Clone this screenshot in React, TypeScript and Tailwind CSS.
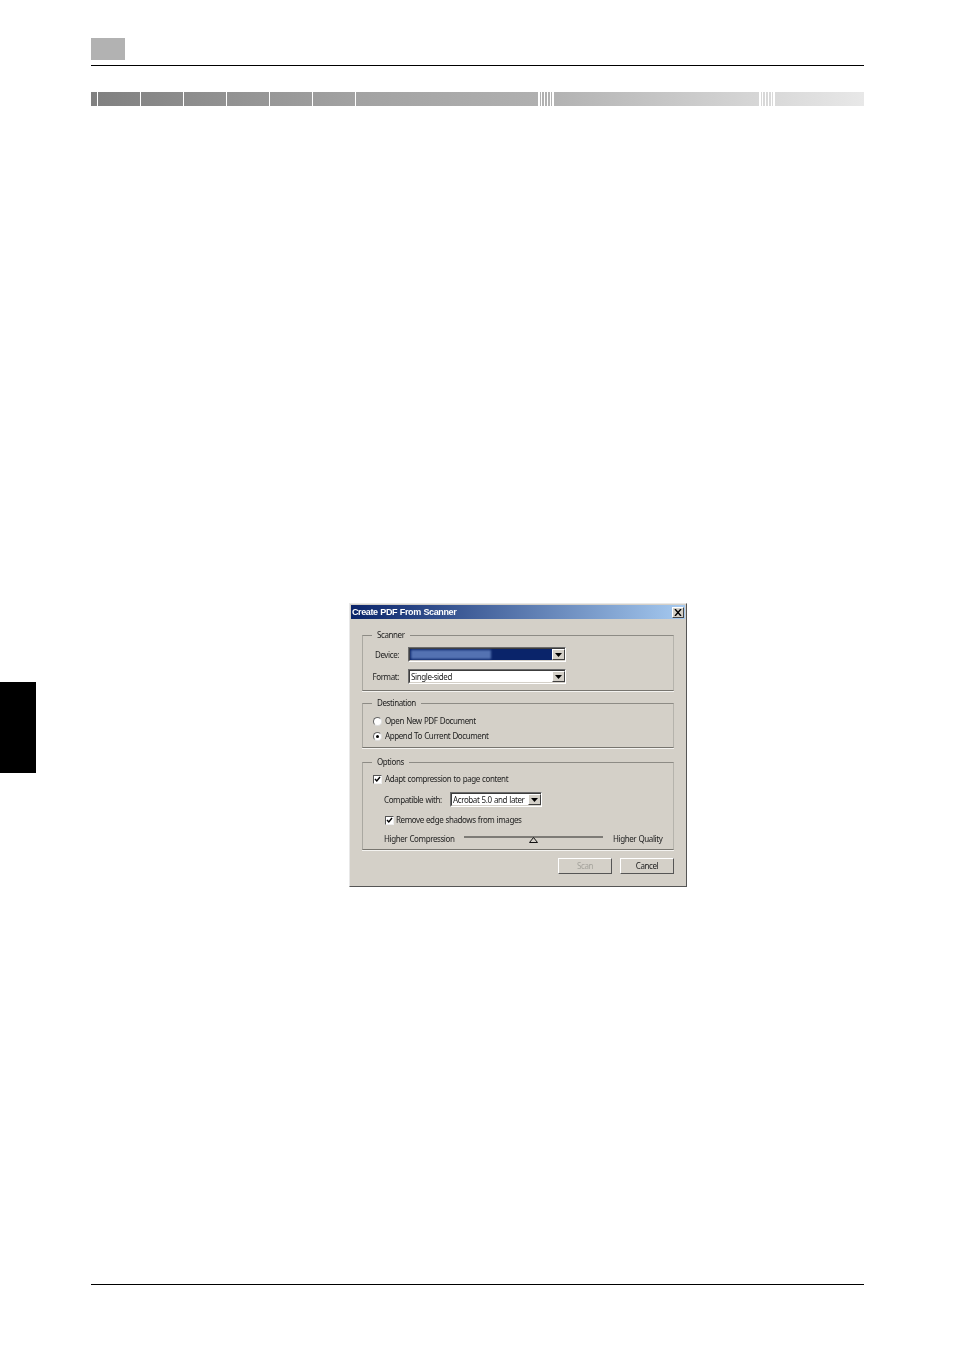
import React from 'react';

const sunken = 'border border-t-[#6b6b6b] border-l-[#6b6b6b] border-r-white border-b-white';
const sunkenInner = 'border border-t-[#3c3c3c] border-l-[#3c3c3c] border-r-[#d4d0c8] border-b-[#d4d0c8]';
const GRADIENT = 'bg-[linear-gradient(90deg,#808080_0%,#a2a2a2_34%,#b0b0b0_58%,#d6d6d6_86%,#e8e8e8_100%)]';

function Stripes() {
  return (
    <div className="flex h-full w-[16px] shrink-0 justify-between">
      {[0, 1, 2, 3, 4, 5].map((i) => (
        <div key={i} className="h-full w-[1.5px] bg-white" />
      ))}
    </div>
  );
}

function HeaderBar() {
  return (
    <div className={`ml-[91px] mt-[26px] flex h-[14px] w-[773px] ${GRADIENT}`}>
      <div className="w-[6px] shrink-0 border-r border-white box-content" />
      {[0, 1, 2, 3, 4, 5].map((i) => (
        <div key={i} className="w-[43px] shrink-0 border-r border-white" />
      ))}
      <div className="w-[182px] shrink-0" />
      <Stripes />
      <div className="w-[205px] shrink-0" />
      <Stripes />
    </div>
  );
}

function ArrowButton() {
  return (
    <div className="flex h-full w-[13px] shrink-0 items-center justify-center border border-t-white border-l-white border-r-[#404040] border-b-[#404040] bg-[#d4d0c8]">
      <svg width="7" height="4" viewBox="0 0 7 4">
        <path d="M0 0h7L3.5 4z" fill="#000" />
      </svg>
    </div>
  );
}

function Combo({ className, children }: { className: string; children: React.ReactNode }) {
  return (
    <div className={`${sunken} h-[15px] ${className}`}>
      <div className={`${sunkenInner} flex h-full w-full border-r-0 bg-white`}>
        {children}
        <ArrowButton />
      </div>
    </div>
  );
}

function Group({ title, className, children }: { title: string; className: string; children: React.ReactNode }) {
  return (
    <fieldset className={`ml-[11px] w-[312px] border border-t-[#8d8b85] border-b-[#77756f] border-l-[#aaa8a1] border-r-[#b5b3ac] shadow-[0_1px_0_#f4f3f0] ${className}`}>
      <legend className="ml-[9px] px-[5px] leading-[12px]">{title}</legend>
      {children}
    </fieldset>
  );
}

function Check({ className }: { className?: string }) {
  return (
    <div className={`flex h-[9px] w-[9px] shrink-0 items-center justify-center border border-t-[#555] border-l-[#555] border-r-[#eee] border-b-[#eee] bg-white ${className ?? ''}`}>
      <svg width="7" height="7" viewBox="0 0 7 7">
        <path d="M1 3l1.8 2L6 1" fill="none" stroke="#000" strokeWidth="1.4" />
      </svg>
    </div>
  );
}

function Radio({ checked }: { checked?: boolean }) {
  return (
    <div className="flex h-[9px] w-[9px] shrink-0 items-center justify-center rounded-full border border-t-[#666] border-l-[#666] border-r-[#ddd] border-b-[#ddd] bg-white">
      {checked && <div className="h-[3px] w-[3px] rounded-full bg-black" />}
    </div>
  );
}

function DialogButton({ label, disabled, className }: { label: string; disabled?: boolean; className?: string }) {
  return (
    <div className={`flex h-[16px] w-[54px] items-center justify-center border border-t-white border-l-white border-r-[#555] border-b-[#555] ${disabled ? 'text-[#a5a39c]' : ''} ${className ?? ''}`}>
      {label}
    </div>
  );
}

function ScannerDialog() {
  return (
    <div className="ml-[313px] h-[284px] w-[338px] border border-t-[#e8e8e8] border-l-[#e8e8e8] border-r-[#555] border-b-[#555] bg-[#d4d0c8] pl-px pr-px pt-px font-['Noto_Sans',sans-serif] text-[8px] leading-[12px] tracking-[-0.4px] [word-spacing:0.5px] text-[#222]">
      <div className="flex h-[14px] items-center justify-between bg-[linear-gradient(90deg,#0a246a,#a6caf0)] pl-[1px] pr-[1px] font-['Liberation_Sans',sans-serif] text-[9px] font-bold tracking-[-0.38px] text-white blur-[0.25px]">
        <span>Create PDF From Scanner</span>
        <div className="flex h-[11px] w-[12px] items-center justify-center border border-t-white border-l-white border-r-[#444] border-b-[#444] bg-[#d4d0c8]">
          <svg width="8" height="7" viewBox="0 0 8 7">
            <path d="M1 0l6 7M7 0L1 7" stroke="#000" strokeWidth="1.4" />
          </svg>
        </div>
      </div>

      <div className="blur-[0.25px]">
        <Group title="Scanner" className="mt-[10px] h-[62px]">
          <div className="mt-[6px] flex items-center">
            <span className="w-[36px] text-right">Device:</span>
            <Combo className="ml-[9px] w-[158px]">
              <div className="flex flex-1 bg-[#0a246a] py-px pl-px">
                <div className="h-full w-[80px] bg-[#5472b2] blur-[1px]" />
              </div>
            </Combo>
          </div>
          <div className="mt-[7px] flex items-center">
            <span className="w-[36px] text-right">Format:</span>
            <Combo className="ml-[9px] w-[158px]">
              <div className="flex-1 pl-px leading-[11px]">Single-sided</div>
            </Combo>
          </div>
        </Group>

        <Group title="Destination" className="mt-[6px] h-[51px]">
          <div className="ml-[10px] mt-[6px] flex items-center gap-[3px]">
            <Radio />
            <span>Open New PDF Document</span>
          </div>
          <div className="ml-[10px] mt-[3px] flex items-center gap-[3px]">
            <Radio checked />
            <span>Append To Current Document</span>
          </div>
        </Group>

        <Group title="Options" className="mt-[8px] h-[94px]">
          <div className="ml-[10px] mt-[5px] flex items-center gap-[3px]">
            <Check />
            <span>Adapt compression to page content</span>
          </div>
          <div className="ml-[21px] mt-[7px] flex items-center">
            <span className="w-[66px]">Compatible with:</span>
            <Combo className="w-[92px]">
              <div className="flex-1 overflow-hidden whitespace-nowrap pl-px leading-[11px]">Acrobat 5.0 and later</div>
            </Combo>
          </div>
          <div className="ml-[22px] mt-[7px] flex items-center gap-[2px]">
            <Check />
            <span>Remove edge shadows from images</span>
          </div>
          <div className="ml-[21px] mt-[7px] flex items-start">
            <span className="w-[80px]">Higher Compression</span>
            <div className="relative mt-[3px] h-[2px] w-[139px] bg-[#7d7b76]">
              <svg className="absolute left-[65px] top-[1px]" width="9" height="6" viewBox="0 0 9 6">
                <path d="M4.5 .5L8.5 5.5H.5z" fill="#d4d0c8" stroke="#111" />
              </svg>
            </div>
            <span className="ml-[10px]">Higher Quality</span>
          </div>
        </Group>

        <div className="mr-[11px] mt-[8px] flex justify-end gap-[8px]">
          <DialogButton label="Scan" disabled />
          <DialogButton label="Cancel" />
        </div>
      </div>
    </div>
  );
}

export default function App() {
  return (
    <div className="h-[1350px] w-[954px] overflow-hidden bg-white pt-[38px]">
      <div className="ml-[91px] h-[22px] w-[34px] bg-[#b2b2b2]" />
      <div className="ml-[91px] mt-[5px] h-px w-[773px] bg-black" />
      <HeaderBar />

      <div className="mt-[497px] flex items-start">
        <div className="mt-[79px] h-[91px] w-[36px] bg-black" />
        <ScannerDialog />
      </div>

      <div className="ml-[91px] mt-[397px] h-px w-[773px] bg-black" />
    </div>
  );
}
